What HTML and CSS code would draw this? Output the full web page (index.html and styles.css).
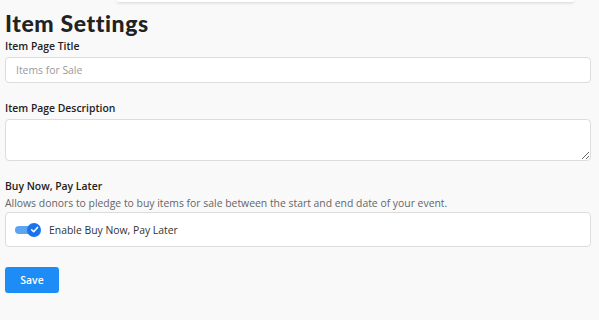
FILE: index.html
```html
<!DOCTYPE html>
<html lang="en">
<head>
  <meta charset="UTF-8">
  <meta name="viewport" content="width=device-width, initial-scale=1.0">
  <title>Item Settings</title>
  <link rel="stylesheet" href="styles.css">
</head>
<body>
  <div class="page">
    <!-- bottom edge of the card above -->
    <div class="prev-card"></div>

    <h1>Item Settings</h1>

    <form class="settings-form" onsubmit="return false">
      <div class="form-group">
        <label for="item-title">Item Page Title</label>
        <input type="text" id="item-title" placeholder="Items for Sale">
      </div>

      <div class="form-group">
        <label for="item-desc">Item Page Description</label>
        <textarea id="item-desc" rows="2"></textarea>
      </div>

      <div class="form-group">
        <label>Buy Now, Pay Later</label>
        <p class="help">Allows donors to pledge to buy items for sale between the start and end date of your event.</p>
        <div class="toggle-box">
          <span class="toggle">
            <span class="knob">
              <svg width="9" height="9" viewBox="0 0 10 10"><path d="M1.8 5.3 L4.1 7.5 L8.3 2.7" fill="none" stroke="#fff" stroke-width="1.7" stroke-linecap="round" stroke-linejoin="round"/></svg>
            </span>
          </span>
          <span class="toggle-label">Enable Buy Now, Pay Later</span>
        </div>
      </div>

      <button type="submit" class="save-btn">Save</button>
    </form>
  </div>
</body>
</html>
```

FILE: styles.css
```css
body {
  font-family: 'Open Sans', sans-serif;
  background: #f9f9f9;
  margin: 0;
  padding: 0;
  color: #222;
}
.page {
  padding: 0 8px 0 5px;
}
.prev-card {
  height: 2px;
  margin: 0 17px 0 112px;
  background: #fff;
  border-radius: 0 0 6px 6px;
  box-shadow: 0 1px 3px rgba(0,0,0,0.18);
}
h1 {
  font-family: 'Lato', sans-serif;
  font-weight: 900;
  font-size: 23px;
  letter-spacing: 0.6px;
  line-height: 26px;
  margin: 8px 0 3px 0;
  color: #222;
}
.settings-form {
  display: flex;
  flex-direction: column;
}
.form-group {
  display: flex;
  flex-direction: column;
  margin-bottom: 18px;
}
label {
  font-size: 10.4px;
  font-weight: 600;
  color: #222;
  line-height: 15px;
  margin-bottom: 3px;
}
input, textarea {
  font-family: 'Open Sans', sans-serif;
  font-size: 10.4px;
  border: 1px solid #dcdcdc;
  border-radius: 4px;
  background: #fff;
  padding: 0 10px;
  margin: 0;
  box-sizing: border-box;
  width: 100%;
  color: #222;
}
input {
  height: 26px;
}
input::placeholder {
  color: #9a9a9a;
}
textarea {
  display: block;
  height: 42px;
  resize: vertical;
  padding-top: 5px;
}
.help {
  font-size: 10.4px;
  color: #666;
  margin: -1px 0 2px 0;
  line-height: 14px;
}
.toggle-box {
  display: flex;
  align-items: center;
  height: 35px;
  box-sizing: border-box;
  border: 1px solid #dcdcdc;
  border-radius: 4px;
  background: #fff;
  padding: 0 9px;
}
.toggle {
  position: relative;
  width: 20px;
  height: 8px;
  border-radius: 4px;
  background: #5aa4f0;
  margin-right: 14px;
}
.knob {
  position: absolute;
  right: -6px;
  top: -3px;
  width: 14px;
  height: 14px;
  border-radius: 50%;
  background: #1a73e8;
  display: flex;
  align-items: center;
  justify-content: center;
}
.knob svg {
  display: block;
}
.toggle-label {
  font-size: 10.4px;
  color: #333;
}
.save-btn {
  align-self: flex-start;
  font-family: 'Open Sans', sans-serif;
  font-size: 10.4px;
  font-weight: 600;
  color: #fff;
  background: #1e8cf7;
  border: none;
  border-radius: 3px;
  width: 54px;
  height: 26px;
  padding: 0;
  margin-top: 2px;
  cursor: pointer;
}
```
